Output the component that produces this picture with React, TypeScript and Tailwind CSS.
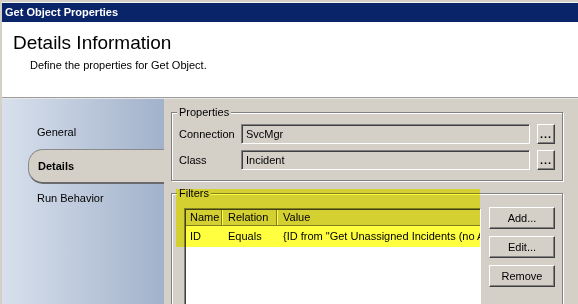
export default function App() {
  return (
    <div className="relative w-[578px] h-[304px] overflow-hidden flex flex-col bg-[#d4d0c8] border-l-2 border-[#d4d0c8] font-['Liberation_Sans',Arial,sans-serif] text-[11px] leading-[13px] text-black">
      <div className="h-[2px] shrink-0 bg-[#d4d0c8]" />
      <div className="h-px shrink-0 bg-[#f4f4f4]" />
      <div className="h-[19px] shrink-0 bg-[#0a246a] text-white font-bold flex items-center pl-[3px]">
        Get Object Properties
      </div>

      {/* header */}
      <div className="h-[75px] shrink-0 bg-white pt-[10px] pl-[11px]">
        <h1 className="text-[19px] leading-[22px]">Details Information</h1>
        <p className="mt-[5px] pl-[17px]">Define the properties for Get Object.</p>
      </div>
      <div className="h-px shrink-0 bg-[#9d9d9d]" />
      <div className="h-px shrink-0 bg-[#e6e6e6]" />

      <div className="flex flex-1 min-h-0">
        {/* nav */}
        <nav className="w-[162px] shrink-0 bg-linear-to-r from-[#d8e0ec] to-[#a2b2cb] pt-[17px] flex flex-col">
          <div className="h-[33px] flex items-center pl-[35px]">General</div>
          <div className="ml-[26px] h-[35px] flex items-center pl-[9px] font-bold bg-[#d4d0c8] rounded-l-[15px] border-l border-t border-[#8a8a8a] border-b-2 border-b-[#6a6a6a]">
            Details
          </div>
          <div className="h-[28px] flex items-center pl-[35px]">Run Behavior</div>
        </nav>

        {/* content */}
        <div className="flex-1 min-w-0 pl-[7px] pr-[15px]">
          <fieldset className="min-w-0 mt-[7px] border border-[#808080] shadow-[1px_1px_0_#fff,inset_1px_1px_0_#fff] pl-[7px] pr-[7px] pt-[5px] pb-[10px]">
            <legend className="-ml-[2px] px-[2px] bg-[#d4d0c8] leading-[13px]">Properties</legend>
            <div className="flex flex-col gap-[6px]">
              <PropRow label="Connection" value="SvcMgr" />
              <PropRow label="Class" value="Incident" />
            </div>
          </fieldset>

          <fieldset className="min-w-0 mt-[6px] h-[140px] border border-[#808080] shadow-[1px_1px_0_#fff,inset_1px_1px_0_#fff] pl-[12px] pr-[7px] pt-[8px]">
            <legend className="-ml-[7px] px-[2px] bg-[#d4d0c8] leading-[13px]">Filters</legend>
            <div className="flex gap-[8px]">
              <div className="flex-1 min-w-0 h-[120px] overflow-hidden bg-white border border-t-[#808080] border-l-[#808080] border-r-white border-b-white shadow-[inset_1px_1px_0_#404040]">
                <div className="flex h-[16px] mt-px ml-px bg-[#d4d0c8] border-b border-[#808080] whitespace-nowrap">
                  <div className="w-[36px] shrink-0 pl-[4px] flex items-center border-r border-[#808080] shadow-[1px_0_0_#fff]">Name</div>
                  <div className="w-[55px] shrink-0 pl-[6px] flex items-center border-r border-[#808080] shadow-[1px_0_0_#fff]">Relation</div>
                  <div className="flex-1 pl-[6px] flex items-center">Value</div>
                </div>
                <div className="flex h-[20px] ml-px items-center whitespace-nowrap">
                  <div className="w-[36px] shrink-0 pl-[4px]">ID</div>
                  <div className="w-[55px] shrink-0 pl-[6px]">Equals</div>
                  <div className="flex-1 min-w-0 pl-[6px] overflow-hidden">
                    {'{ID from "Get Unassigned Incidents (no Assigned User)"}'}
                  </div>
                </div>
              </div>
              <div className="flex flex-col gap-[7px] -mt-px shrink-0">
                <WinButton label="Add..." />
                <WinButton label="Edit..." />
                <WinButton label="Remove" />
              </div>
            </div>
          </fieldset>
        </div>
      </div>

      {/* highlighter */}
      <div className="absolute left-[174px] top-[189px] w-[304px] h-[58px] bg-[#ffff40] mix-blend-multiply pointer-events-none" />
    </div>
  );
}

function PropRow({ label, value }: { label: string; value: string }) {
  return (
    <div className="flex items-center">
      <span className="w-[62px] shrink-0">{label}</span>
      <div className="flex-1 min-w-0 h-[20px] flex items-center pl-[4px] bg-[#d4d0c8] border border-t-[#808080] border-l-[#808080] border-r-white border-b-white shadow-[inset_1px_1px_0_#404040]">
        {value}
      </div>
      <button className="ml-[7px] shrink-0 w-[18px] h-[20px] flex items-center justify-center bg-[#d4d0c8] border border-t-white border-l-white border-r-[#404040] border-b-[#404040] shadow-[inset_-1px_-1px_0_#808080] font-bold tracking-[1px]">
        ...
      </button>
    </div>
  );
}

function WinButton({ label }: { label: string }) {
  return (
    <button className="w-[66px] h-[22px] flex items-center justify-center bg-[#d4d0c8] border border-t-white border-l-white border-r-[#404040] border-b-[#404040] shadow-[inset_-1px_-1px_0_#808080]">
      {label}
    </button>
  );
}
